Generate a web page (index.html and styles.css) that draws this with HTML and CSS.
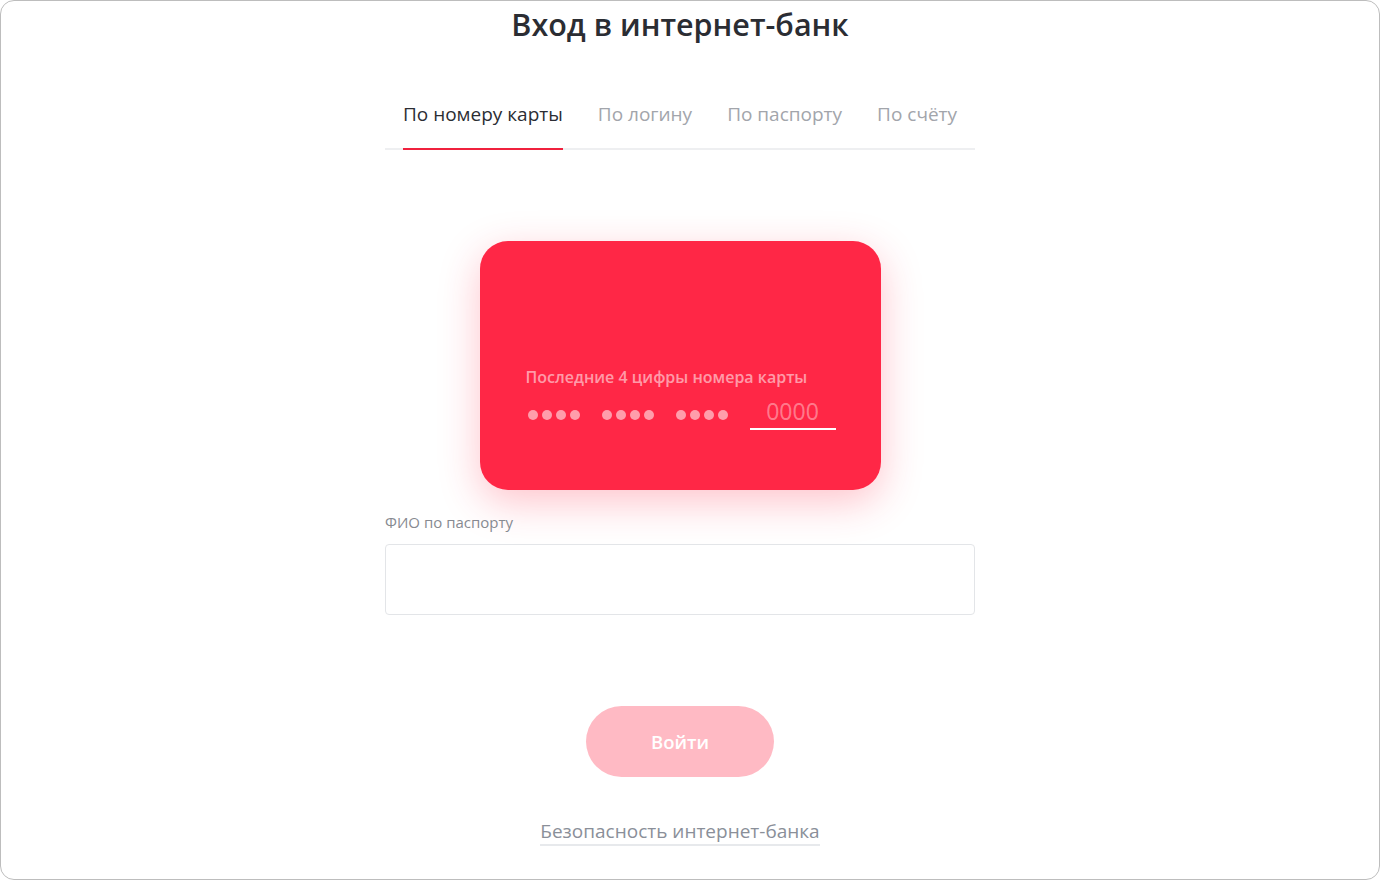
FILE: index.html
```html
<!DOCTYPE html>
<html lang="ru">
<head>
    <meta charset="UTF-8">
    <meta name="viewport" content="width=device-width, initial-scale=1.0">
    <title>Вход в интернет-банк</title>
    <link rel="stylesheet" href="styles.css">
</head>
<body>
<div class="frame">
    <div class="login">
        <h1 class="title">Вход в интернет-банк</h1>

        <div class="tabs">
            <a href="#" class="tab active">По номеру карты</a>
            <a href="#" class="tab">По логину</a>
            <a href="#" class="tab">По паспорту</a>
            <a href="#" class="tab">По счёту</a>
        </div>

        <div class="card">
            <div class="card-label">Последние 4 цифры номера карты</div>
            <div class="card-number">
                <span class="dots"><i></i><i></i><i></i><i></i></span>
                <span class="dots"><i></i><i></i><i></i><i></i></span>
                <span class="dots"><i></i><i></i><i></i><i></i></span>
                <input type="text" class="last-digits" placeholder="0000" maxlength="4">
            </div>
        </div>

        <div class="field">
            <label class="field-label" for="fio">ФИО по паспорту</label>
            <input type="text" class="field-input" id="fio">
        </div>

        <button class="submit">Войти</button>

        <a href="#" class="security">Безопасность интернет-банка</a>
    </div>
</div>
</body>
</html>
```

FILE: styles.css
```css
*{
    margin: 0;
    padding: 0;
    box-sizing: border-box;
}
body{
    font-family: "Open Sans", "Noto Sans", sans-serif;
    background-color: #fff;
}
.frame{
    height: 880px;
    border: 1px solid #bdbdbd;
    border-radius: 14px;
    padding-right: 20px;
}
.login{
    width: 590px;
    margin: 0 auto;
    display: flex;
    flex-direction: column;
    align-items: center;
}
.title{
    font-size: 30.5px;
    font-weight: 600;
    color: #2b2d33;
    line-height: 40px;
    margin-top: 3px;
}
.tabs{
    width: 100%;
    display: flex;
    justify-content: center;
    gap: 35px;
    margin-top: 57px;
    border-bottom: 2px solid #eeeff1;
}
.tab{
    font-size: 19px;
    color: #a2a5ab;
    text-decoration: none;
    line-height: 26px;
    padding-bottom: 21px;
    margin-bottom: -2px;
    border-bottom: 2px solid transparent;
}
.tab.active{
    color: #2b2d33;
    border-bottom-color: #f0213e;
}
.card{
    width: 401px;
    height: 249px;
    margin-top: 91px;
    background-color: #ff2746;
    border-radius: 28px;
    box-shadow: 0 12px 40px rgba(255, 39, 70, 0.28);
    padding: 126px 46px 0 46px;
}
.card-label{
    font-size: 16px;
    font-weight: 600;
    color: rgba(255, 255, 255, 0.55);
    line-height: 20px;
}
.card-number{
    display: flex;
    align-items: center;
    margin-top: 7px;
}
.dots{
    display: flex;
    gap: 4px;
    margin-right: 22px;
    margin-top: 5px;
}
.dots:first-child{
    margin-left: 2px;
}
.dots i{
    display: block;
    width: 10px;
    height: 10px;
    border-radius: 50%;
    background-color: rgba(255, 255, 255, 0.55);
}
.last-digits{
    width: 86px;
    height: 36px;
    border: none;
    border-bottom: 2px solid #fff;
    background: transparent;
    font-family: inherit;
    font-size: 23px;
    color: #fff;
    text-align: center;
    outline: none;
}
.last-digits::placeholder{
    color: rgba(255, 255, 255, 0.4);
}
.field{
    width: 100%;
    margin-top: 22px;
    display: flex;
    flex-direction: column;
}
.field-label{
    font-size: 15px;
    color: #878a91;
    line-height: 20px;
}
.field-input{
    margin-top: 12px;
    height: 71px;
    border: 1px solid #e3e5e8;
    border-radius: 4px;
    font-family: inherit;
    font-size: 18px;
    padding: 0 16px;
    outline: none;
}
.submit{
    margin-top: 91px;
    width: 188px;
    height: 71px;
    border: none;
    border-radius: 36px;
    background-color: #ffbac4;
    color: #fff;
    font-family: inherit;
    font-size: 18.5px;
    font-weight: 600;
}
.security{
    margin-top: 41px;
    font-size: 19px;
    color: #8a8f99;
    text-decoration: none;
    line-height: 26px;
    border-bottom: 2px solid #e7e9ec;
}
```
